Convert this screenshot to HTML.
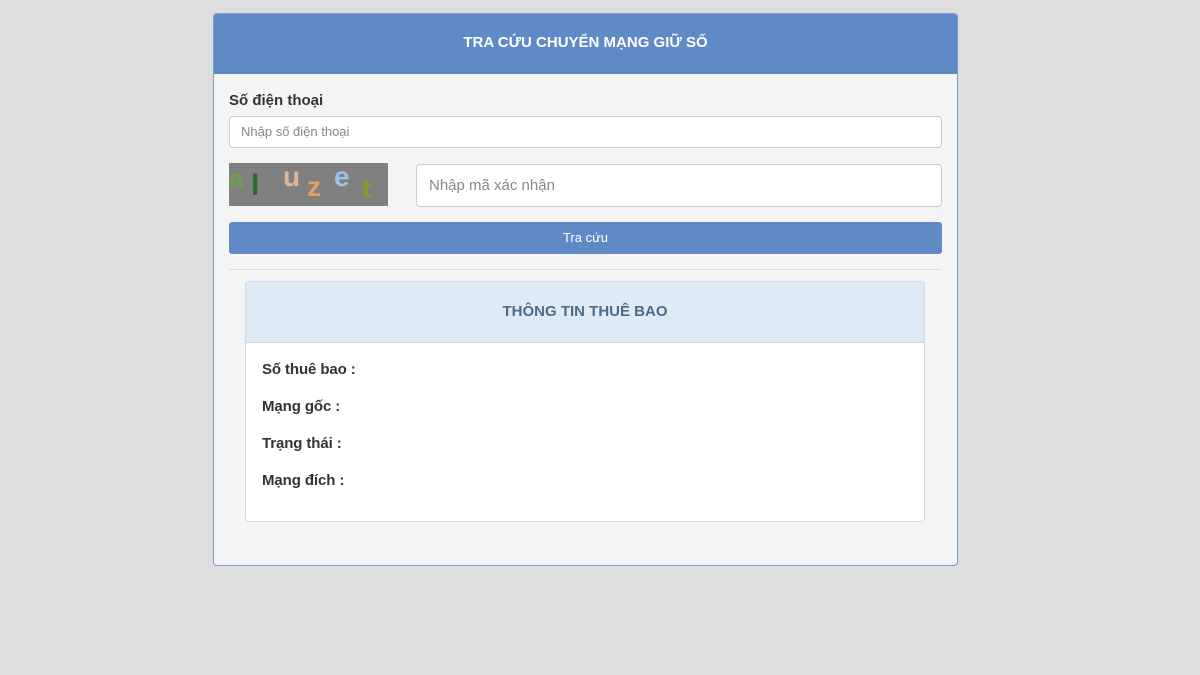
<!DOCTYPE html>
<html><head><meta charset="utf-8"><style>
body{margin:0;width:1200px;height:675px;background:#dedede;font-family:"Liberation Sans",Arial,sans-serif;position:relative;overflow:hidden}
.box{position:absolute;left:213px;top:13px;width:743px;height:551px;background:#f4f4f4;border:1px solid #7a9cc6;border-radius:4px;overflow:hidden}
.hd{height:60px;background:#5f8ac6;color:#fff;font-weight:bold;font-size:15px;text-align:center;line-height:58px}
.abs{position:absolute}
.lbl{left:15px;top:78px;font-size:15px;font-weight:bold;color:#333}
.in{background:#fff;border:1px solid #ccc;border-radius:4px;box-sizing:border-box;color:#888}
.cap{left:15px;top:149px;width:159px;height:43px;background:#808080;overflow:hidden}
.btn{left:15px;top:208px;width:713px;height:32px;background:#5f8ac6;border-radius:3px;color:#fff;font-size:13px;text-align:center;line-height:32px}
.hr{left:15px;top:255px;width:713px;height:1px;background:#ddd}
.pn{left:31px;top:267px;width:680px;height:241px;background:#fff;border:1px solid #c9dcea;border-radius:4px;overflow:hidden;box-sizing:border-box}
.ph{height:60px;background:#deeaf5;border-bottom:1px solid #c9dcea;color:#4a6d8c;font-weight:bold;font-size:15px;text-align:center;line-height:60px}
.r{position:absolute;left:16px;font-size:15px;font-weight:bold;color:#333;letter-spacing:-0.1px}
</style></head><body>
<div class="box">
<div class="hd">TRA CỨU CHUYỂN MẠNG GIỮ SỐ</div>
<div class="abs lbl">Số điện thoại</div>
<div class="abs in" style="left:15px;top:102px;width:713px;height:32px;font-size:13px;line-height:30px;padding-left:11px">Nhập số điện thoại</div>
<div class="abs cap">
<span class="abs" style="left:0;top:0;font-size:26px;font-weight:bold;color:#6ea04a">a</span>
<span class="abs" style="left:22px;top:6px;font-size:30px;font-weight:bold;color:#2d6a2d">l</span>
<span class="abs" style="left:54px;top:-2px;font-size:28px;font-weight:bold;color:#d8b9a0">u</span>
<span class="abs" style="left:78px;top:8px;font-size:28px;font-weight:bold;color:#e0a060">z</span>
<span class="abs" style="left:105px;top:-2px;font-size:28px;font-weight:bold;color:#9ec0ea">e</span>
<span class="abs" style="left:133px;top:10px;font-size:28px;font-weight:bold;color:#8a9a30">t</span>
</div>
<div class="abs in" style="left:202px;top:150px;width:526px;height:43px;font-size:15px;line-height:41px;padding-left:12px">Nhập mã xác nhận</div>
<div class="abs btn">Tra cứu</div>
<div class="abs hr"></div>
<div class="abs pn">
<div class="ph">THÔNG TIN THUÊ BAO</div>
<div class="r" style="top:79px">Số thuê bao :</div>
<div class="r" style="top:116px">Mạng gốc :</div>
<div class="r" style="top:153px">Trạng thái :</div>
<div class="r" style="top:190px">Mạng đích :</div>
</div>
</div>
</body></html>
